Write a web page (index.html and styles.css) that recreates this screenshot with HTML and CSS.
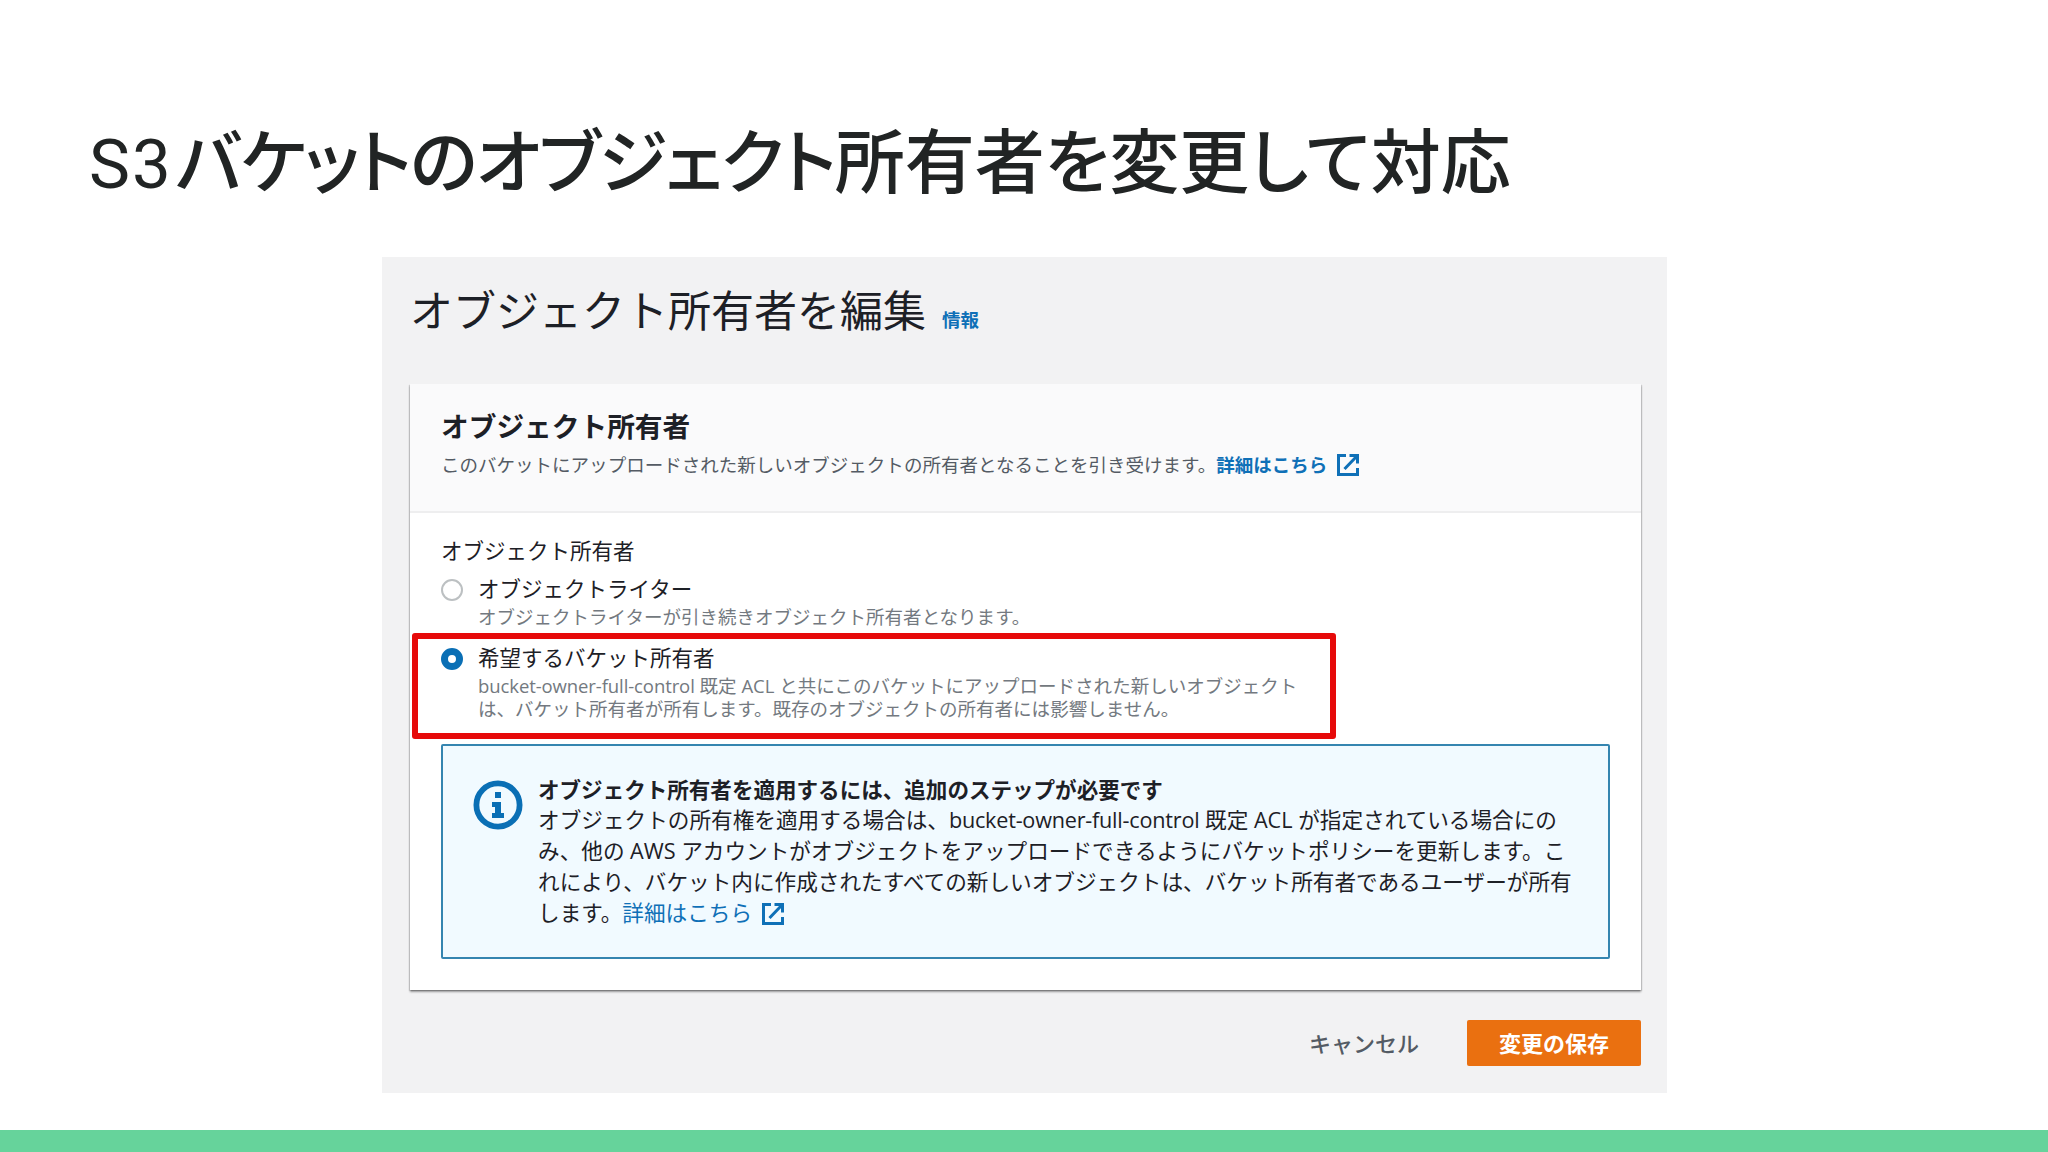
FILE: index.html
```html
<!DOCTYPE html>
<html lang="ja">

<head>
    <meta charset="utf-8"/>
    <title>S3バケットのオブジェクト所有者を変更して対応</title>
    <meta name="viewport" content="width=device-width, initial-scale=1">
    <link rel="stylesheet" href="styles.css">
</head>

<body>
<svg class="symbols" xmlns="http://www.w3.org/2000/svg">
    <symbol id="external" viewBox="0 0 22 22">
        <path d="M9 1.5H1.5v19h19V14M12.5 1.5h8v8M20 2 7.5 15" fill="none" stroke="currentColor" stroke-width="3"/>
    </symbol>
</svg>

<h1 class="slide-title"><span class="latin">S3</span><span class="kana">バケットのオブジェクト</span>所有者を変更して対応</h1>

<main class="console">
    <header class="page-header">
        <h2>オブジェクト所有者を編集</h2>
        <a class="info">情報</a>
    </header>

    <section class="container">
        <header class="container-header">
            <h3>オブジェクト所有者</h3>
            <p>このバケットにアップロードされた新しいオブジェクトの所有者となることを引き受けます。<a class="bold">詳細はこちら<svg class="external"><use href="#external"/></svg></a></p>
        </header>

        <div class="container-body">
            <div class="label">オブジェクト所有者</div>
            <div class="option">
                <span class="radio"></span>
                <div>
                    <div class="option-name">オブジェクトライター</div>
                    <div class="option-text">オブジェクトライターが引き続きオブジェクト所有者となります。</div>
                </div>
            </div>
            <div class="option highlighted">
                <span class="radio checked"></span>
                <div>
                    <div class="option-name">希望するバケット所有者</div>
                    <div class="option-text"><span class="code">bucket-owner-full-control</span> 既定 ACL と共にこのバケットにアップロードされた新しいオブジェクト<br>は、バケット所有者が所有します。既存のオブジェクトの所有者には影響しません。</div>
                </div>
            </div>

            <div class="alert">
                <svg class="alert-icon" viewBox="0 0 50 50">
                    <circle cx="25" cy="25" r="21.6" fill="none" stroke="currentColor" stroke-width="5.8"/>
                    <path d="M22 12h6v6h-6zM19 22h9v11h3v5H19v-5h3v-6h-3z" fill="currentColor"/>
                </svg>
                <div class="alert-text">
                    <strong>オブジェクト所有者を適用するには、追加のステップが必要です</strong><br>
                    オブジェクトの所有権を適用する場合は、<span class="code">bucket-owner-full-control</span> 既定 ACL が指定されている場合にの<br>
                    み、他の AWS アカウントがオブジェクトをアップロードできるようにバケットポリシーを更新します。こ<br>
                    れにより、バケット内に作成されたすべての新しいオブジェクトは、バケット所有者であるユーザーが所有<br>
                    します。<a>詳細はこちら<svg class="external"><use href="#external"/></svg></a>
                </div>
            </div>
        </div>
    </section>

    <div class="actions">
        <span class="cancel">キャンセル</span>
        <span class="save">変更の保存</span>
    </div>
</main>

<footer></footer>
</body>

</html>
```
FILE: styles.css
```css
* {
    box-sizing: border-box;
}

body {
    margin: 0;
    width: 2048px;
    height: 1152px;
    display: flex;
    flex-direction: column;
    overflow: hidden;
    background: white;
    color: #1d2026;
    font-family: "Open Sans", "Noto Sans CJK JP", sans-serif;
    font-size: 21.5px;
    white-space: nowrap;
}

h1, h2, h3, p {
    margin: 0;
}

a {
    color: #0f70b7;
}

.symbols {
    position: absolute;
    width: 0;
    height: 0;
}

.slide-title {
    height: 257px;
    padding: 108px 0 0 89px;
    font-family: "Noto Sans CJK JP", sans-serif;
    font-size: 70px;
    font-weight: 500;
    line-height: 100px;
    font-feature-settings: "palt";
    color: #212424;
}

.slide-title .latin {
    margin-right: 3px;
    font-family: Roboto, sans-serif;
    font-size: 69px;
    font-weight: 400;
    letter-spacing: 2px;
}

.slide-title .kana {
    letter-spacing: -1.6px;
}

.console {
    width: 1285px;
    height: 836px;
    margin-left: 382px;
    padding: 24px 26px 0 28px;
    background: #f2f2f3;
}

.page-header {
    display: flex;
    height: 103px;
    gap: 16px;
}

.page-header h2 {
    font-size: 43px;
    font-weight: 400;
    line-height: 60px;
}

.info {
    font-size: 18.5px;
    font-weight: 700;
    line-height: 78px;
}

.container {
    height: 606px;
    background: white;
    box-shadow: 0 2px 2px 0 rgba(0, 0, 0, 0.35), 1px 1px 1px 0 rgba(0, 0, 0, 0.12), -1px 1px 1px 0 rgba(0, 0, 0, 0.12);
}

.container-header {
    height: 129px;
    padding: 24px 31px 0;
    background: #fafafb;
    border-bottom: 2px solid #eeeeef;
}

.container-header h3 {
    font-size: 27.7px;
    font-weight: 700;
    line-height: 36px;
}

.container-header p {
    font-size: 18.52px;
    line-height: 41px;
    color: #545b64;
}

.bold {
    font-weight: 700;
}

.external {
    width: 22px;
    height: 22px;
    margin-left: 10px;
    vertical-align: -4px;
}

.container-body {
    padding: 22px 31px 0;
}

.label {
    line-height: 32px;
}

.option {
    display: flex;
    gap: 15px;
    padding-top: 6px;
}

.option-name {
    line-height: 32px;
}

.option-text {
    font-size: 18.52px;
    line-height: 23.5px;
    color: #737980;
}

.option-text .code {
    letter-spacing: -0.1px;
}

.radio {
    width: 22px;
    height: 22px;
    margin-top: 6px;
    border: 2px solid #bcc0c2;
    border-radius: 50%;
    background: white;
}

.radio.checked {
    border: 7px solid #0a6fb5;
}

.option.highlighted {
    width: 924px;
    height: 106px;
    margin: 4px 0 5px -29px;
    padding: 3px 0 0 23px;
    border: 6px solid #e60a0a;
    border-radius: 3px;
}

.alert {
    display: flex;
    width: 1169px;
    height: 215px;
    padding: 29px 0 0 30px;
    gap: 15px;
    border: 2px solid #3585b0;
    border-radius: 2px;
    background: #f1faff;
}

.alert-icon {
    width: 50px;
    height: 50px;
    margin-top: 5px;
    color: #0a6fb5;
}

.alert-text {
    font-size: 21.63px;
    line-height: 30.75px;
}

.alert-text strong {
    font-size: 21.55px;
}

.alert-text .code {
    letter-spacing: -0.22px;
}

.actions {
    display: flex;
    justify-content: flex-end;
    align-items: center;
    gap: 48px;
    padding-top: 30px;
    font-size: 22px;
    font-weight: 700;
    line-height: 46px;
}

.cancel {
    color: #545b64;
    font-weight: 500;
}

.save {
    width: 174px;
    border-radius: 2px;
    background: #ea7010;
    color: white;
    text-align: center;
}

footer {
    height: 22px;
    margin-top: auto;
    background: #66d39b;
}
```
